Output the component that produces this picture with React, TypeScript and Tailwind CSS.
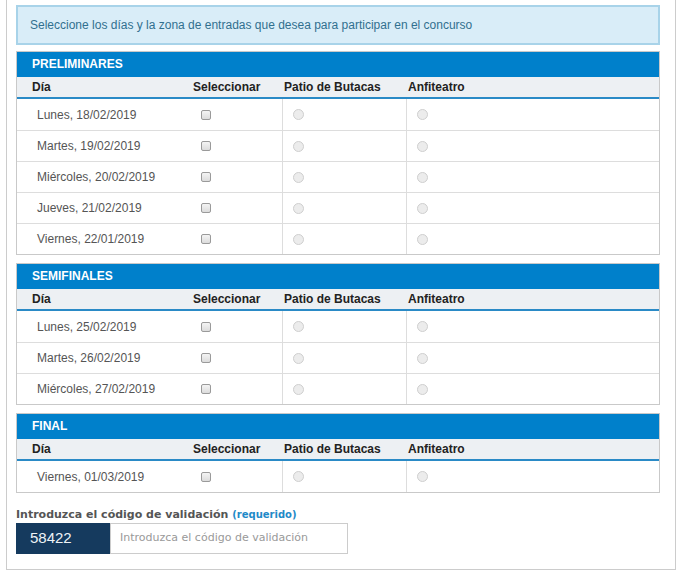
import React from "react";

type Row = { day: string };

const sections: { title: string; rows: Row[] }[] = [
  {
    title: "PRELIMINARES",
    rows: [
      { day: "Lunes, 18/02/2019" },
      { day: "Martes, 19/02/2019" },
      { day: "Miércoles, 20/02/2019" },
      { day: "Jueves, 21/02/2019" },
      { day: "Viernes, 22/01/2019" },
    ],
  },
  {
    title: "SEMIFINALES",
    rows: [
      { day: "Lunes, 25/02/2019" },
      { day: "Martes, 26/02/2019" },
      { day: "Miércoles, 27/02/2019" },
    ],
  },
  {
    title: "FINAL",
    rows: [{ day: "Viernes, 01/03/2019" }],
  },
];

function CheckBox() {
  return (
    <span className="block w-[10px] h-[10px] rounded-[2px] border border-[#9a9a9a] bg-gradient-to-b from-[#f4f4f4] to-[#dcdcdc]" />
  );
}

function Radio() {
  return (
    <span className="block w-[11px] h-[11px] rounded-full border border-[#cfcfcf] bg-[#ececec]" />
  );
}

function Panel({ title, rows }: { title: string; rows: Row[] }) {
  return (
    <div className="border border-[#c9c9c9]">
      <div className="h-[25px] bg-[#0080cb] text-white font-bold text-[12px] leading-[25px] pl-[15px]">
        {title}
      </div>
      <div className="grid grid-cols-[168px_97px_124px_1fr] h-[22px] bg-[#edf0f3] border-b-2 border-[#2a8ac6] text-[12px] font-bold text-[#222] leading-[20px]">
        <div className="pl-[15px]">Día</div>
        <div className="pl-[8px]">Seleccionar</div>
        <div className="pl-[2px]">Patio de Butacas</div>
        <div className="pl-[2px]">Anfiteatro</div>
      </div>
      {rows.map((r, i) => (
        <div
          key={r.day}
          className={
            "grid grid-cols-[168px_97px_124px_1fr] h-[31px] text-[12px] text-[#555] " +
            (i > 0 ? "border-t border-[#dddddd]" : "")
          }
        >
          <div className="pl-[20px] flex items-center">{r.day}</div>
          <div className="pl-[16px] flex items-center">
            <CheckBox />
          </div>
          <div className="border-l border-[#dddddd] pl-[10px] flex items-center">
            <Radio />
          </div>
          <div className="border-l border-[#dddddd] pl-[10px] flex items-center">
            <Radio />
          </div>
        </div>
      ))}
    </div>
  );
}

export default function App() {
  return (
    <div className="w-[681px] h-[581px] bg-white font-['Liberation_Sans',Arial,sans-serif]">
      <div className="ml-[6px] w-[670px] border-x border-b border-[#cccccc] pl-[9px] pr-[15px] pt-[5px] pb-[15px]">
        <div className="h-[40px] border-2 border-[#a8d3e9] bg-[#d9edf8] text-[12px] text-[#31708f] pl-[12px] flex items-center">
          Seleccione los días y la zona de entradas que desea para participar en el concurso
        </div>
        <div className="mt-[6px] flex flex-col gap-[8px]">
          {sections.map((s) => (
            <Panel key={s.title} title={s.title} rows={s.rows} />
          ))}
        </div>
        <div className="mt-[14px] font-['DejaVu_Sans',Verdana,sans-serif] text-[11px] font-bold text-[#555] leading-[16px]">
          Introduzca el código de validación{" "}
          <span className="text-[10px] text-[#1f8ac8]">(requerido)</span>
        </div>
        <div className="flex h-[31px]">
          <div className="w-[94px] bg-[#153a5e] text-[#eef2f6] text-[15px] pl-[14px] flex items-center">
            58422
          </div>
          <div className="w-[238px] border border-[#cccccc] flex items-center pl-[9px] font-['DejaVu_Sans',Verdana,sans-serif] text-[11px] text-[#999]">
            Introduzca el código de validación
          </div>
        </div>
      </div>
    </div>
  );
}
